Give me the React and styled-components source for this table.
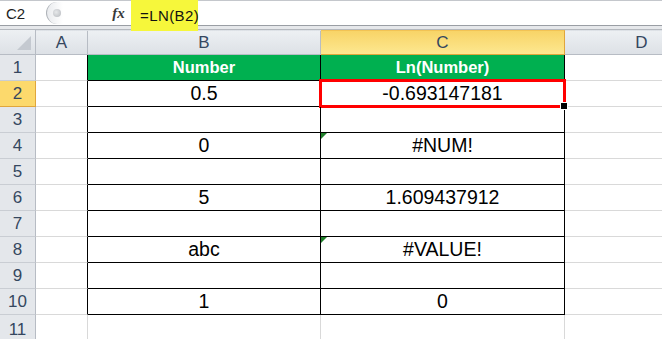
import React from "react";
import styled, { createGlobalStyle, css } from "styled-components";

const GlobalStyle = createGlobalStyle`
  body {
    margin: 0;
    background: #ffffff;
    overflow: hidden;
  }
`;

const columns = [
  { id: "A", width: 52 },
  { id: "B", width: 233 },
  { id: "C", width: 244 },
  { id: "D", width: 154 },
];

const rows = [
  { b: "Number", c: "Ln(Number)", head: true },
  { b: "0.5", c: "-0.693147181", selected: true },
  { b: "", c: "" },
  { b: "0", c: "#NUM!", flag: true },
  { b: "", c: "" },
  { b: "5", c: "1.609437912" },
  { b: "", c: "" },
  { b: "abc", c: "#VALUE!", flag: true },
  { b: "", c: "" },
  { b: "1", c: "0" },
];

const App = () => {
  return (
    <Page>
      <GlobalStyle />
      <FormulaBar>
        <NameBox>C2</NameBox>
        <Splitter>
          <Knob />
        </Splitter>
        <FxLabel>fx</FxLabel>
        <Formula>=LN(B2)</Formula>
      </FormulaBar>
      <BarGap />
      <Sheet>
        <Corner>
          <CornerTriangle />
        </Corner>
        {columns.map((col) => (
          <ColHeader key={col.id} $active={col.id === "C"}>
            {col.id}
          </ColHeader>
        ))}

        {rows.map((row, i) => (
          <React.Fragment key={i}>
            <RowHeader $active={row.selected}>{i + 1}</RowHeader>
            <Cell $edge />
            <Cell $table $head={row.head}>
              {row.b}
            </Cell>
            <Cell $table $head={row.head} $selected={row.selected}>
              {row.flag && <ErrorFlag />}
              {row.c}
              {row.selected && <FillHandle />}
            </Cell>
            <Cell />
          </React.Fragment>
        ))}

        <RowHeader>11</RowHeader>
        <Cell />
        <Cell />
        <Cell />
        <Cell />
      </Sheet>
    </Page>
  );
};

const Page = styled.div`
  width: 662px;
  height: 339px;
  overflow: hidden;
  background: #ffffff;
  font-family: "Liberation Sans", Arial, sans-serif;
`;

const FormulaBar = styled.div`
  display: flex;
  align-items: stretch;
  height: 26px;
  box-sizing: border-box;
  border-top: 1px solid #c4c7cc;
  border-bottom: 1px solid #9a9ea4;
  background: #ffffff;
  position: relative;
  z-index: 2;
`;

const NameBox = styled.div`
  width: 46px;
  box-sizing: border-box;
  padding-left: 6px;
  display: flex;
  align-items: center;
  font-size: 15px;
  color: #1e1e1e;
`;

const Splitter = styled.div`
  width: 60px;
  box-sizing: border-box;
  margin: 1px 0;
  border-left: 1px solid #aeb2b8;
  border-radius: 12px 0 0 12px;
  background: linear-gradient(90deg, #e9ebee 0px, #ffffff 16px);
  display: flex;
  align-items: center;
  padding-left: 6px;
`;

const Knob = styled.div`
  width: 8px;
  height: 8px;
  border-radius: 50%;
  background: radial-gradient(circle at 40% 40%, #e6e8ea, #b5b8bd);
`;

const FxLabel = styled.div`
  width: 25px;
  display: flex;
  align-items: center;
  justify-content: center;
  font-family: "Liberation Serif", "Times New Roman", serif;
  font-style: italic;
  font-weight: bold;
  font-size: 15px;
  color: #3a3a3a;
`;

const Formula = styled.div`
  align-self: flex-start;
  margin-top: -1px;
  height: 31px;
  width: 67px;
  box-sizing: border-box;
  padding-left: 9px;
  display: flex;
  align-items: center;
  background: #f6f73b;
  font-size: 15px;
  letter-spacing: 0.4px;
  color: #111111;
`;

const BarGap = styled.div`
  height: 3px;
  background: #e6e8eb;
  border-bottom: 1px solid #b4b8be;
`;

const Sheet = styled.div`
  display: grid;
  grid-template-columns: 36px ${columns.map((c) => `${c.width}px`).join(" ")};
  grid-template-rows: 25px repeat(10, 26px) 30px;
  width: 719px;
`;

const headerBase = css`
  box-sizing: border-box;
  display: flex;
  align-items: center;
  justify-content: center;
  font-family: "Liberation Sans", Calibri, sans-serif;
  font-size: 17px;
  color: #35475f;
`;

const Corner = styled.div`
  ${headerBase};
  position: relative;
  background: linear-gradient(#edf0f3, #dde1e6);
  border-right: 1px solid #b7bcc4;
  border-bottom: 1px solid #b7bcc4;
`;

const CornerTriangle = styled.div`
  position: absolute;
  right: 4px;
  bottom: 4px;
  width: 0;
  height: 0;
  border-left: 14px solid transparent;
  border-bottom: 14px solid #c4c9d0;
`;

const ColHeader = styled.div`
  ${headerBase};
  background: ${(p) =>
    p.$active
      ? "linear-gradient(#f8d467, #fde890)"
      : "linear-gradient(#edf0f3, #dde1e6)"};
  border-right: 1px solid ${(p) => (p.$active ? "#e0a63c" : "#b7bcc4")};
  border-bottom: 1px solid ${(p) => (p.$active ? "#e0a63c" : "#b7bcc4")};
  border-top: 1px solid ${(p) => (p.$active ? "#f2c354" : "transparent")};
`;

const RowHeader = styled.div`
  ${headerBase};
  background: ${(p) => (p.$active ? "#fcd96c" : "#e4e7eb")};
  border-right: 1px solid ${(p) => (p.$active ? "#e0a63c" : "#b7bcc4")};
  border-bottom: 1px solid ${(p) => (p.$active ? "#e0a63c" : "#c9cdd3")};
`;

const Cell = styled.div`
  position: relative;
  box-sizing: border-box;
  display: flex;
  align-items: center;
  justify-content: center;
  font-size: 19.5px;
  color: #000000;
  border-right: 1px solid ${(p) => (p.$table || p.$edge ? "#000000" : "#d9d9d9")};
  border-bottom: 1px solid ${(p) => (p.$table ? "#000000" : "#d9d9d9")};
  ${(p) =>
    p.$head &&
    css`
      background: #00b050;
      color: #ffffff;
      font-weight: bold;
      font-size: 16.5px;
    `}
  ${(p) =>
    p.$selected &&
    css`
      &::after {
        content: "";
        position: absolute;
        left: -2px;
        top: -2px;
        right: -2px;
        bottom: -2px;
        border: 3px solid #ff0000;
        pointer-events: none;
      }
    `}
`;

const ErrorFlag = styled.span`
  position: absolute;
  left: 0;
  top: 0;
  width: 0;
  height: 0;
  border-top: 6px solid #1f7f2a;
  border-right: 6px solid transparent;
`;

const FillHandle = styled.span`
  position: absolute;
  right: -4px;
  bottom: -4px;
  width: 6px;
  height: 6px;
  background: #000000;
  border: 1px solid #ffffff;
  z-index: 1;
`;

export default App;
